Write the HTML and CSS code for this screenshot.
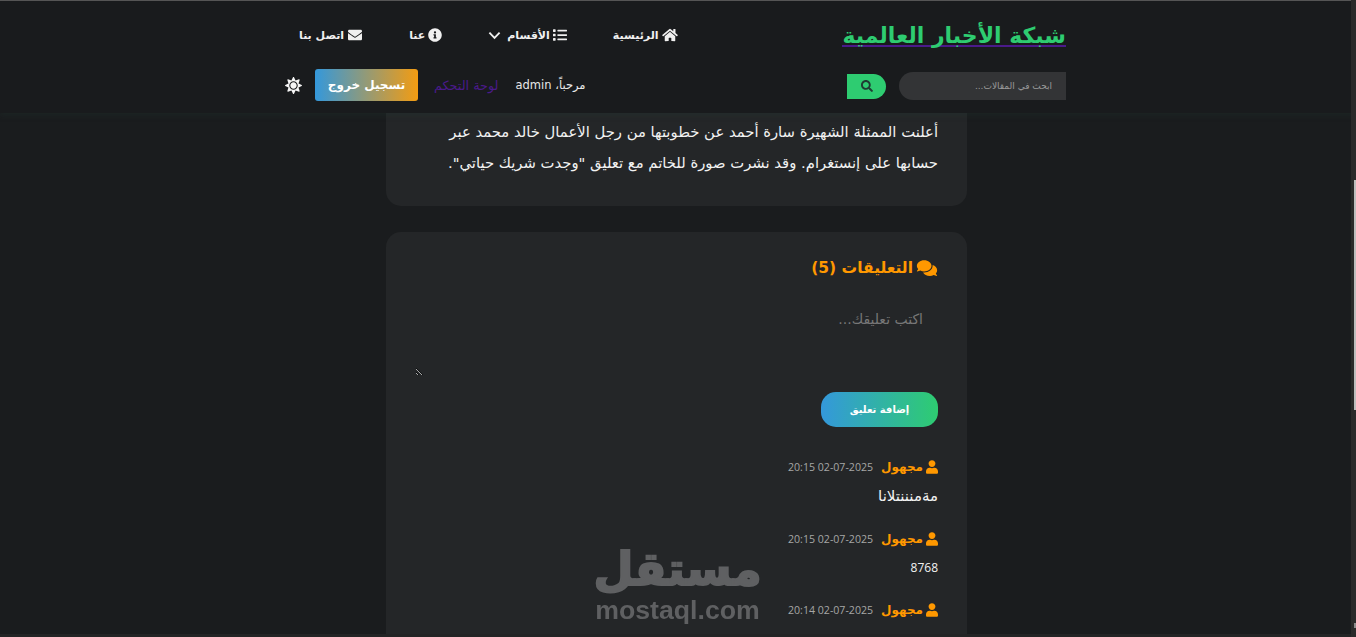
FILE: index.html
```html
<!DOCTYPE html>
<html lang="ar" dir="rtl">
<head>
<meta charset="utf-8">
<title>شبكة الأخبار العالمية</title>
<link rel="stylesheet" href="styles.css">
</head>
<body>
<header class="site-header">
  <div class="header-inner">
    <div class="row row-top">
      <a class="logo" href="#">شبكة الأخبار العالمية</a>
      <nav class="nav">
        <a href="#"><svg class="ic ic-home" viewBox="0 0 576 512"><path d="M280.37 148.26L96 300.11V464a16 16 0 0 0 16 16l112.06-.29a16 16 0 0 0 15.92-16V368a16 16 0 0 1 16-16h64a16 16 0 0 1 16 16v95.64a16 16 0 0 0 16 16.05L464 480a16 16 0 0 0 16-16V300L295.67 148.26a12.19 12.19 0 0 0-15.3 0zM571.6 251.47L488 182.56V44.05a12 12 0 0 0-12-12h-56a12 12 0 0 0-12 12v72.61L318.47 43a48 48 0 0 0-61 0L4.34 251.47a12 12 0 0 0-1.6 16.9l25.5 31A12 12 0 0 0 45.15 301l235.22-193.74a12.19 12.19 0 0 1 15.3 0L530.9 301a12 12 0 0 0 16.9-1.6l25.5-31a12 12 0 0 0-1.7-16.93z"/></svg>الرئيسية</a>
        <a href="#"><svg class="ic" viewBox="0 0 512 512"><path d="M80 368H16a16 16 0 0 0-16 16v64a16 16 0 0 0 16 16h64a16 16 0 0 0 16-16v-64a16 16 0 0 0-16-16zm0-320H16A16 16 0 0 0 0 64v64a16 16 0 0 0 16 16h64a16 16 0 0 0 16-16V64a16 16 0 0 0-16-16zm0 160H16a16 16 0 0 0-16 16v64a16 16 0 0 0 16 16h64a16 16 0 0 0 16-16v-64a16 16 0 0 0-16-16zm416 176H176a16 16 0 0 0-16 16v32a16 16 0 0 0 16 16h320a16 16 0 0 0 16-16v-32a16 16 0 0 0-16-16zm0-320H176a16 16 0 0 0-16 16v32a16 16 0 0 0 16 16h320a16 16 0 0 0 16-16V80a16 16 0 0 0-16-16zm0 160H176a16 16 0 0 0-16 16v32a16 16 0 0 0 16 16h320a16 16 0 0 0 16-16v-32a16 16 0 0 0-16-16z"/></svg>الأقسام<svg class="chev" viewBox="0 0 14 9"><path d="M1.500 1.500L7 7l5.500-5.500"/></svg></a>
        <a href="#"><svg class="ic" viewBox="0 0 512 512"><path fill-rule="evenodd" d="M256 8C119 8 8 119 8 256s111 248 248 248 248-111 248-248S393 8 256 8zm0 110a42 42 0 1 1 0 84 42 42 0 0 1 0-84zm56 254c0 6.600-5.400 12-12 12h-88c-6.600 0-12-5.400-12-12v-24c0-6.600 5.400-12 12-12h12v-64h-12c-6.600 0-12-5.400-12-12v-24c0-6.600 5.400-12 12-12h64c6.600 0 12 5.400 12 12v100h12c6.600 0 12 5.400 12 12v24z"/></svg>عنا</a>
        <a href="#"><svg class="ic ic-home" viewBox="0 0 512 512"><path d="M502.300 190.800c3.900-3.100 9.700-.2 9.700 4.700V400c0 26.500-21.500 48-48 48H48c-26.500 0-48-21.500-48-48V195.600c0-5 5.700-7.800 9.700-4.700 22.400 17.400 52.100 39.500 154.100 113.600 21.100 15.400 56.700 47.800 92.200 47.600 35.700.3 72-32.800 92.300-47.600 102-74.100 131.600-96.300 154-113.700zM256 320c23.200.4 56.600-29.200 73.400-41.400 132.700-96.300 142.800-104.700 173.400-128.700 5.800-4.500 9.200-11.500 9.200-18.900v-19c0-26.500-21.500-48-48-48H48C21.500 64 0 85.500 0 112v19c0 7.400 3.400 14.300 9.200 18.900 30.600 23.900 40.700 32.400 173.400 128.700 16.800 12.200 50.200 41.800 73.400 41.400z"/></svg>اتصل بنا</a>
      </nav>
    </div>
    <div class="row row-bottom">
      <form class="search">
        <input class="search-input" type="text" placeholder="ابحث في المقالات...">
        <button class="search-btn" type="button"><svg viewBox="0 0 512 512"><path d="M505 442.700L405.300 343c-4.500-4.500-10.600-7-17-7H372c27.600-35.300 44-79.700 44-128C416 93.100 322.900 0 208 0S0 93.100 0 208s93.100 208 208 208c48.300 0 92.700-16.400 128-44v16.300c0 6.400 2.500 12.500 7 17l99.700 99.700c9.400 9.400 24.600 9.400 33.900 0l28.300-28.300c9.400-9.400 9.400-24.600.1-34zM208 336c-70.700 0-128-57.200-128-128 0-70.700 57.200-128 128-128 70.700 0 128 57.200 128 128 0 70.700-57.200 128-128 128z"/></svg></button>
      </form>
      <div class="user-tools">
        <span class="welcome">مرحباً، admin</span>
        <a class="dash" href="#">لوحة التحكم</a>
        <a class="logout" href="#">تسجيل خروج</a>
        <svg class="sun" viewBox="0 0 512 512"><path d="M256 160c-52.900 0-96 43.100-96 96s43.100 96 96 96 96-43.100 96-96-43.100-96-96-96zm246.400 80.500l-94.700-47.300 33.500-100.400c4.500-13.600-8.400-26.500-21.900-21.900l-100.400 33.500-47.400-94.800c-6.400-12.800-24.600-12.800-31 0l-47.300 94.700L92.700 70.800c-13.600-4.500-26.500 8.400-21.900 21.900l33.500 100.400-94.700 47.400c-12.800 6.400-12.800 24.600 0 31l94.700 47.300-33.500 100.500c-4.500 13.600 8.400 26.500 21.900 21.900l100.400-33.500 47.300 94.700c6.400 12.800 24.600 12.800 31 0l47.300-94.700 100.400 33.500c13.600 4.500 26.500-8.400 21.900-21.900l-33.500-100.400 94.700-47.300c13-6.500 13-24.700.2-31.100zm-155.900 106c-49.900 49.900-131.100 49.900-181 0-49.900-49.900-49.900-131.100 0-181 49.900-49.900 131.100-49.900 181 0 49.900 49.900 49.900 131.100 0 181z"/></svg>
      </div>
    </div>
  </div>
</header>
<main class="main">
  <article class="card article">
    <p>أعلنت الممثلة الشهيرة سارة أحمد عن خطوبتها من رجل الأعمال خالد محمد عبر حسابها على إنستغرام. وقد نشرت صورة للخاتم مع تعليق "وجدت شريك حياتي".</p>
  </article>
  <section class="card comments">
    <h2 class="comments-title"><svg viewBox="0 0 576 512"><path d="M416 192c0-88.400-93.100-160-208-160S0 103.600 0 192c0 34.300 14.100 65.900 38 92-13.400 30.200-35.500 54.200-35.800 54.500-2.200 2.300-2.800 5.700-1.500 8.700S4.800 352 8 352c36.600 0 66.900-12.300 88.700-25 32.200 15.700 70.300 25 111.300 25 114.900 0 208-71.600 208-160zm122 220c23.900-26 38-57.700 38-92 0-66.900-53.500-124.200-129.300-148.100.9 6.600 1.300 13.300 1.300 20.100 0 105.900-107.700 192-240 192-10.800 0-21.300-.8-31.700-1.900C207.800 439.600 281.800 480 368 480c41 0 79.100-9.200 111.300-25 21.800 12.700 52.100 25 88.700 25 3.200 0 6.100-1.900 7.300-4.800 1.300-2.900.7-6.300-1.500-8.700-.3-.3-22.400-24.200-35.800-54.500z"/></svg>التعليقات (5)</h2>
    <textarea class="comment-box" placeholder="اكتب تعليقك..."></textarea>
    <button class="submit" type="button">إضافة تعليق</button>
    <div class="comment">
      <div class="meta"><svg viewBox="0 0 448 512"><path d="M224 256c70.700 0 128-57.300 128-128S294.700 0 224 0 96 57.300 96 128s57.300 128 128 128zm89.600 32h-16.700c-22.200 10.200-46.900 16-72.900 16s-50.600-5.800-72.900-16h-16.700C60.200 288 0 348.200 0 422.400V464c0 26.500 21.500 48 48 48h352c26.500 0 48-21.500 48-48v-41.600c0-74.200-60.200-134.400-134.400-134.400z"/></svg><strong>مجهول</strong><time>02-07-2025 20:15</time></div>
      <p class="text-ar">مةمنننتلانا</p>
    </div>
    <div class="comment">
      <div class="meta"><svg viewBox="0 0 448 512"><path d="M224 256c70.700 0 128-57.300 128-128S294.700 0 224 0 96 57.300 96 128s57.300 128 128 128zm89.600 32h-16.700c-22.200 10.200-46.900 16-72.900 16s-50.600-5.800-72.900-16h-16.700C60.200 288 0 348.200 0 422.400V464c0 26.500 21.500 48 48 48h352c26.500 0 48-21.500 48-48v-41.600c0-74.200-60.200-134.400-134.400-134.400z"/></svg><strong>مجهول</strong><time>02-07-2025 20:15</time></div>
      <p class="text-num">8768</p>
    </div>
    <div class="comment">
      <div class="meta"><svg viewBox="0 0 448 512"><path d="M224 256c70.700 0 128-57.300 128-128S294.700 0 224 0 96 57.300 96 128s57.300 128 128 128zm89.600 32h-16.700c-22.200 10.200-46.900 16-72.900 16s-50.600-5.800-72.900-16h-16.700C60.200 288 0 348.200 0 422.400V464c0 26.500 21.500 48 48 48h352c26.500 0 48-21.500 48-48v-41.600c0-74.200-60.200-134.400-134.400-134.400z"/></svg><strong>مجهول</strong><time>02-07-2025 20:14</time></div>
    </div>
  </section>
</main>
<div class="watermark"><span class="wm-ar">مستقل</span><span class="wm-en">mostaql.com</span></div>
<div class="scrollbar"><div class="thumb"></div><div class="thumb-end"></div></div>
<div class="bottom-edge"></div>
</body>
</html>
```
FILE: styles.css
```css
* { box-sizing: border-box; }
html, body { margin: 0; height: 637px; overflow: hidden; }
body {
  background: #1a1c1e;
  color: #f2f2f2;
  font-family: "DejaVu Sans", "Noto Sans", sans-serif;
  border-top: 1px solid #555;
}
a { color: inherit; text-decoration: none; }
svg { fill: currentColor; flex: none; }

.site-header {
  height: 112px;
  background: #191b1d;
  box-shadow: 0 3px 6px rgba(40, 70, 60, .18);
  position: relative;
  z-index: 2;
}
.header-inner {
  width: 781px;
  margin: 0 290px 0 285px;
  display: flex;
  flex-direction: column;
}
.row { display: flex; align-items: center; justify-content: space-between; }
.row-top { height: 62px; padding: 6px 0 0 14px; }
.row-bottom { height: 46px; }

.logo {
  color: #2ecc71;
  font-size: 22px;
  font-weight: 700;
  line-height: 18px;
  border-bottom: 2px solid #4a1a8a;
  padding-top: 4px;
}
.nav { display: flex; gap: 46px; font-size: 11px; font-weight: 700; color: #f0f0f0; }
.nav a { display: flex; align-items: center; gap: 3px; }
.ic { width: 14px; height: 14px; }
.ic-home { width: 16px; }
.chev { width: 13px; height: 9px; fill: none; stroke: currentColor; stroke-width: 2; margin-right: 3px; }

.search { display: flex; align-items: center; gap: 13px; }
.search-input {
  width: 167px;
  height: 28px;
  background: #333436;
  border: 0;
  border-radius: 14px 0 0 14px;
  padding: 0 14px;
  font: 9px "DejaVu Sans", sans-serif;
  color: #ddd;
}
.search-input::placeholder { color: #9a9a9a; }
.search-btn {
  width: 39px;
  height: 25px;
  border: 0;
  padding: 0;
  background: #2ecc71;
  border-radius: 0 12.500px 12.500px 0;
  color: #1f3d33;
  display: flex;
  align-items: center;
  justify-content: center;
}
.search-btn svg { width: 12px; height: 12px; }

.user-tools { display: flex; align-items: center; font-size: 11.500px; padding-bottom: 2px; }
.welcome { color: #e8e8e8; }
.dash { color: #4a1a8a; margin-right: 17px; font-size: 12.800px; }
.logout {
  margin-right: 16px;
  width: 103px;
  height: 32px;
  border-radius: 3px;
  background: linear-gradient(90deg, #3498db, #f39c12);
  color: #fff;
  font-size: 12px;
  font-weight: 700;
  display: flex;
  align-items: center;
  justify-content: center;
}
.sun { width: 17px; height: 17px; margin-right: 13px; color: #f5f5f5; }

.main {
  width: 581px;
  margin: 0 389px 0 386px;
  display: flex;
  flex-direction: column;
  gap: 26px;
}
.card { background: #242628; border-radius: 15px; }
.article {
  height: 93px;
  border-radius: 0 0 15px 15px;
  padding: 3px 29px 0;
  font-size: 14.800px;
  line-height: 31px;
  color: #f2f2f2;
}
.article p { margin: 0; }
.comments { height: 420px; padding: 26px 29px 0; }
.comments-title {
  margin: 0;
  color: #ff9800;
  font-size: 15.500px;
  line-height: 20px;
  font-weight: 700;
  display: flex;
  align-items: center;
  gap: 3px;
}
.comments-title svg { width: 22px; height: 18px; }
.comment-box {
  display: block;
  width: 100%;
  height: 73px;
  margin-top: 25px;
  padding: 8px 15px;
  background: transparent;
  border: 0;
  outline: 0;
  font: 14px "DejaVu Sans", sans-serif;
  color: #ddd;
}
.comment-box::placeholder { color: #777; }
.submit {
  display: block;
  width: 117px;
  height: 35px;
  margin-top: 16px;
  border: 0;
  border-radius: 15px;
  background: linear-gradient(90deg, #3498db, #2ecc71);
  color: #fff;
  font: 700 10px "DejaVu Sans", sans-serif;
}
.comment { height: 71.500px; }
.comment:first-of-type { margin-top: 31px; }
.meta { display: flex; align-items: center; height: 18px; gap: 3px; font-size: 10.600px; }
.meta svg { width: 12px; height: 14px; color: #ff9800; }
.meta strong { color: #ff9800; font-size: 12px; }
.meta time { color: #a6a6a6; margin-right: 5px; font-family: "Open Sans", sans-serif; }
.comment p { margin: 11px 0 0; line-height: 18px; color: #f2f2f2; }
.text-ar { font-size: 15px; }
.text-num { font-size: 12px; font-family: "Open Sans", sans-serif; }

.watermark {
  position: fixed;
  left: 595px;
  top: 540px;
  width: 165px;
  display: flex;
  flex-direction: column;
  align-items: center;
  color: #5f6062;
  z-index: 3;
}
.wm-ar { font: 700 46px/58px "DejaVu Sans", sans-serif; -webkit-text-stroke: 2px #5f6062; }
.wm-en { font: 700 26.700px/24px "Liberation Sans", sans-serif; direction: ltr; }

.scrollbar {
  position: fixed;
  top: 0;
  right: 0;
  width: 5px;
  height: 637px;
  background: #2a2a2a;
  z-index: 4;
}
.thumb { position: absolute; top: 180px; right: 0; width: 2px; height: 230px; background: #bdbdbd; }
.thumb-end { position: absolute; top: 623px; right: 0; width: 2px; height: 5px; background: #8a8a8a; }
.bottom-edge {
  position: fixed;
  left: 0;
  right: 0;
  bottom: 0;
  height: 3px;
  background: #232425;
  z-index: 3;
}
```
